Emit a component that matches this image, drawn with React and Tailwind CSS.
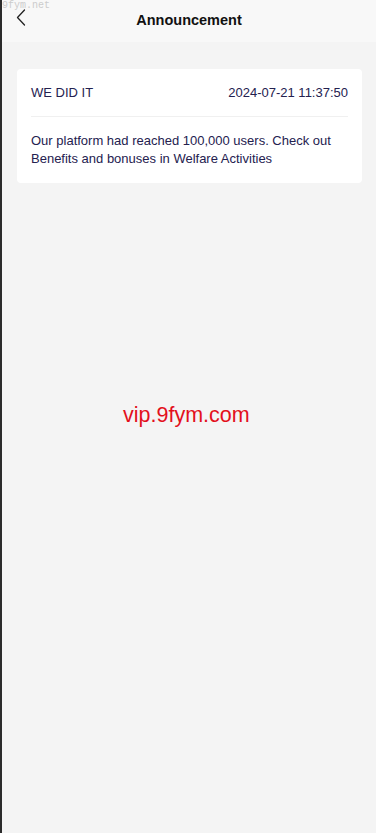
import React from "react";

export default function App() {
  return (
    <div className="relative flex min-h-[833px] w-[376px] bg-[#f4f4f4]" style={{ fontFamily: '"Liberation Sans", Arial, sans-serif' }}>
      <div className="w-[2px] shrink-0 bg-[#2b2b2b]" />
      <div className="flex min-w-0 flex-1 flex-col">
        <header className="relative flex h-[42px] items-center justify-center bg-[#f8f8f8]">
          <span className="absolute left-0 top-0 text-[10px] leading-[11px] text-[#cccccc]" style={{ fontFamily: '"Liberation Mono", monospace' }}>9fym.net</span>
          <button className="absolute left-[13px] top-[8px] flex h-[18px] w-[11px] items-center justify-center">
            <svg width="10" height="17" viewBox="0 0 10 17" fill="none">
              <path d="M8.5 1 L1.5 8.5 L8.5 16" stroke="#222" strokeWidth="1.3" strokeLinecap="round" strokeLinejoin="round" />
            </svg>
          </button>
          <h1 className="text-[14.5px] font-bold text-[#111]">Announcement</h1>
        </header>
        <main className="px-[15px] pt-[27px] pr-[14px]">
          <div className="rounded-[4px] bg-white px-[14px]">
            <div className="flex items-center justify-between border-b border-[#f0f0f0] pt-[15px] pb-[14px] text-[13px] leading-[18px] text-[#24214f]">
              <span>WE DID IT</span>
              <span>2024-07-21 11:37:50</span>
            </div>
            <p className="pt-[15px] pb-[15px] text-[13px] leading-[18px] text-[#24214f]">
              Our platform had reached 100,000 users. Check out Benefits and bonuses in Welfare Activities
            </p>
          </div>
        </main>
      </div>
      <div className="pointer-events-none absolute left-[123px] top-[402px] text-[21.5px] leading-[26px] text-[#e3101c]">vip.9fym.com</div>
    </div>
  );
}
